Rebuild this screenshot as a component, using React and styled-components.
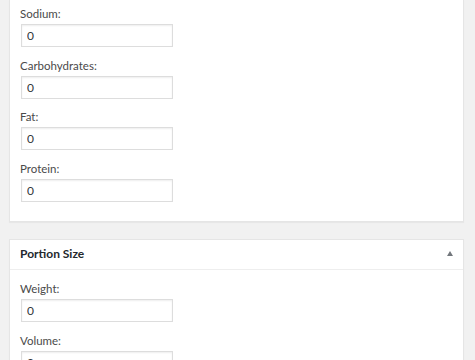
import React from 'react'
import styled, { createGlobalStyle } from 'styled-components'

const Global = createGlobalStyle`
  html, body {
    margin: 0;
    padding: 0;
    background: #f1f1f1;
    overflow: hidden;
  }
  body {
    font-family: Lato, "Open Sans", sans-serif;
    font-size: 11.5px;
    color: #444;
  }
`;

const Page = styled.div`
  padding-left: 9px;
  width: 455px;
  display: flex;
  flex-direction: column;
  gap: 17px;
`;

const Postbox = styled.div`
  background: #fff;
  border: 1px solid #e5e5e5;
  border-top: ${(p) => (p.$cut ? 'none' : '1px solid #e5e5e5')};
  box-shadow: 0 1px 1px rgba(0, 0, 0, 0.04);
`;

const Handle = styled.div`
  height: 29px;
  display: flex;
  align-items: center;
  justify-content: space-between;
  padding: 0 10px 0 10px;
  border-bottom: 1px solid #eee;

  & h2 {
    margin: 0;
    font-size: 12px;
    font-weight: 700;
    line-height: 1.4;
    color: #23282d;
  }
`;

const Toggle = styled.span`
  width: 0;
  height: 0;
  margin-top: -1px;
  border-left: 3.5px solid transparent;
  border-right: 3.5px solid transparent;
  border-bottom: 5px solid #72777c;
`;

const Inside = styled.div`
  padding: ${(p) => p.$top}px 10px ${(p) => p.$bottom}px;
  display: flex;
  flex-direction: column;
  gap: 8.67px;
`;

const Field = styled.div`
  display: flex;
  flex-direction: column;
  align-items: flex-start;

  & label {
    line-height: 18px;
    color: #4a4a4a;
  }
`;

const Input = styled.input`
  box-sizing: border-box;
  margin: 1px;
  width: 152px;
  height: 23px;
  padding: 0 5px;
  border: 1px solid #ddd;
  box-shadow: inset 0 1px 2px rgba(0, 0, 0, 0.07);
  background: #fff;
  color: #32373c;
  font-family: Lato, "Open Sans", sans-serif;
  font-size: 12px;
  outline: none;
`;

const NumberField = ({ label }) => (
  <Field>
    <label>{label}:</label>
    <Input type="text" defaultValue="0" />
  </Field>
);

export default function App() {
  return (
    <Page>
      <Global />
      <Postbox $cut>
        <Inside $top={5} $bottom={18}>
          <NumberField label="Sodium" />
          <NumberField label="Carbohydrates" />
          <NumberField label="Fat" />
          <NumberField label="Protein" />
        </Inside>
      </Postbox>
      <Postbox>
        <Handle>
          <h2>Portion Size</h2>
          <Toggle />
        </Handle>
        <Inside $top={10} $bottom={18}>
          <NumberField label="Weight" />
          <NumberField label="Volume" />
        </Inside>
      </Postbox>
    </Page>
  );
}
